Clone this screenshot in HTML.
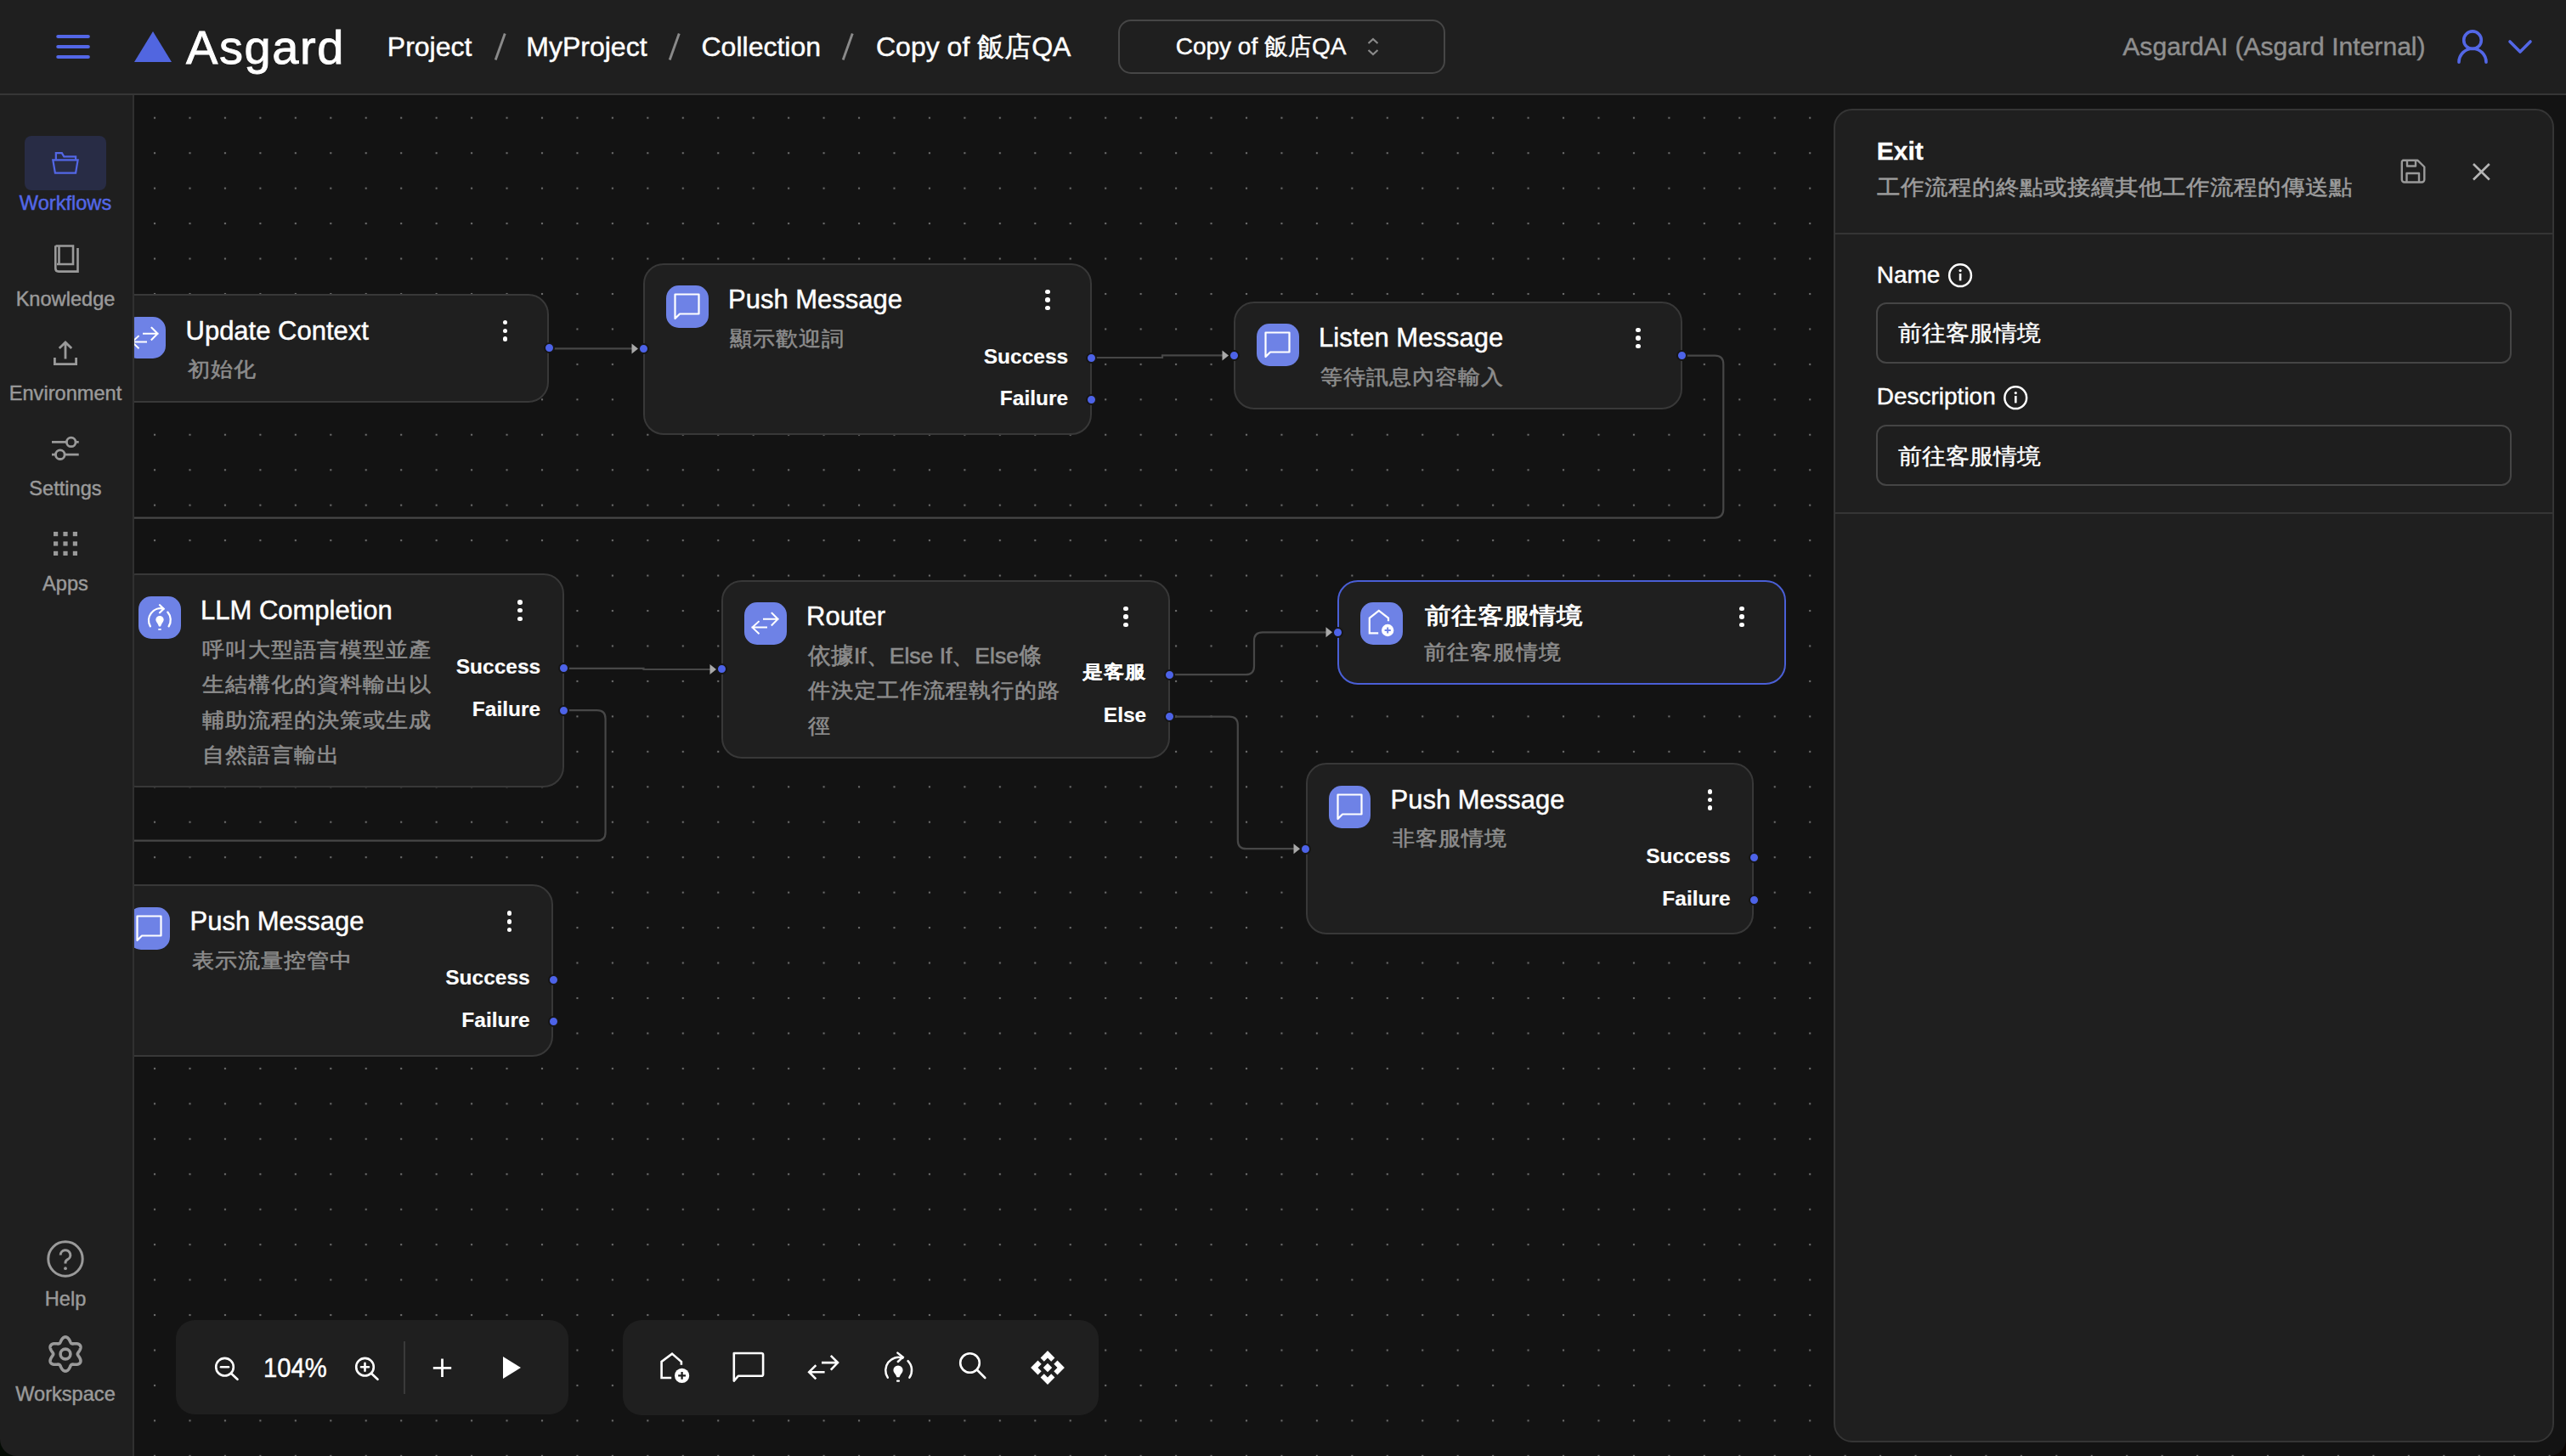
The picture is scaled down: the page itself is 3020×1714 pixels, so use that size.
<!DOCTYPE html>
<html><head><meta charset="utf-8">
<style>
*{box-sizing:border-box;margin:0;padding:0}
html,body{width:3020px;height:1714px;overflow:hidden;background:#131313;font-family:"Liberation Sans",sans-serif;color:#fff}
.txt{position:absolute;white-space:nowrap;line-height:1}
svg{position:absolute;overflow:visible}
.box{position:absolute}
</style></head><body>

<div class="box" style="left:0;top:112px;width:3020px;height:1602px;background:#131313"></div>
<svg style="left:0;top:0" width="3020" height="1714"><defs><pattern id="dp" x="161.3" y="118.0" width="41.45" height="41.45" patternUnits="userSpaceOnUse"><rect x="19.7" y="19.7" width="2.1" height="2.1" fill="#6c6c6c"/></pattern></defs><rect x="157" y="111" width="2863" height="1603" fill="url(#dp)"/></svg>
<svg style="left:0;top:0" width="3020" height="1714"><path d="M646.4 410.4 H744" fill="none" stroke="#474747" stroke-width="2.2"/></svg>
<svg style="left:0;top:0" width="3020" height="1714"><path d="M743.5 404.4 L751 410.4 L743.5 416.4 Z" fill="#a9a9a9"/></svg>
<svg style="left:0;top:0" width="3020" height="1714"><path d="M1285 421 H1368 V418.4 H1439" fill="none" stroke="#474747" stroke-width="2.2"/></svg>
<svg style="left:0;top:0" width="3020" height="1714"><path d="M1438.5 412.4 L1446 418.4 L1438.5 424.4 Z" fill="#a9a9a9"/></svg>
<svg style="left:0;top:0" width="3020" height="1714"><path d="M1980 418.6 H2018.3 Q2028.3 418.6 2028.3 428.6 V599.6 Q2028.3 609.6 2018.3 609.6 H150" fill="none" stroke="#474747" stroke-width="2.2"/></svg>
<svg style="left:0;top:0" width="3020" height="1714"><path d="M664.3 786.8 H757.5 V788 H836" fill="none" stroke="#474747" stroke-width="2.2"/></svg>
<svg style="left:0;top:0" width="3020" height="1714"><path d="M835.5 782 L843 788 L835.5 794 Z" fill="#a9a9a9"/></svg>
<svg style="left:0;top:0" width="3020" height="1714"><path d="M664.3 836.2 H702.6 Q712.6 836.2 712.6 846.2 V979.7 Q712.6 989.7 702.6 989.7 H150" fill="none" stroke="#474747" stroke-width="2.2"/></svg>
<svg style="left:0;top:0" width="3020" height="1714"><path d="M1377.3 794.2 H1466 Q1476 794.2 1476 784.2 V754.3 Q1476 744.3 1486 744.3 H1561" fill="none" stroke="#474747" stroke-width="2.2"/></svg>
<svg style="left:0;top:0" width="3020" height="1714"><path d="M1560.5 738.3 L1568 744.3 L1560.5 750.3 Z" fill="#a9a9a9"/></svg>
<svg style="left:0;top:0" width="3020" height="1714"><path d="M1377.3 843.6 H1446.8 Q1456.8 843.6 1456.8 853.6 V989.2 Q1456.8 999.2 1466.8 999.2 H1523" fill="none" stroke="#474747" stroke-width="2.2"/></svg>
<svg style="left:0;top:0" width="3020" height="1714"><path d="M1522.5 993.2 L1530 999.2 L1522.5 1005.2 Z" fill="#a9a9a9"/></svg>
<div class="box" style="left:118.5px;top:346px;width:527.5px;height:127.7px;background:#1f1f1f;border:2px solid #383838;border-radius:24px"></div>
<div class="box" style="left:145.5px;top:372.7px;width:49.7px;height:49.7px;background:#6e82e6;border-radius:15px"></div>
<svg style="left:145.5px;top:372.7px" width="50" height="50" viewBox="0 0 50 50"><g fill="none" stroke="#fff" stroke-width="2" stroke-linecap="square"><path d="M23 19.8 H39.5 M32.5 12.8 L39.5 19.8 L32.5 26.8"/><path d="M26 29.6 H9.5 M16.8 22.8 L9.5 29.6 L16.8 36.6"/></g></svg>
<div class="txt" style="left:218.5px;top:373.5px;font-size:31px;color:#fff;font-weight:normal;-webkit-text-stroke:0.45px #fff;">Update Context</div>
<div class="txt" style="left:220.5px;top:422.1px;font-size:26.5px;color:#8c8c8c;font-weight:normal;transform:scaleY(0.92);transform-origin:50% 48%;-webkit-text-stroke:0.6px #8c8c8c;">初始化</div>
<div class="box" style="left:591.8px;top:376.9px;width:5.5px;height:5.5px;border-radius:50%;background:#fff"></div>
<div class="box" style="left:591.8px;top:386.5px;width:5.5px;height:5.5px;border-radius:50%;background:#fff"></div>
<div class="box" style="left:591.8px;top:396.2px;width:5.5px;height:5.5px;border-radius:50%;background:#fff"></div>
<div class="box" style="left:112.0px;top:403.4px;width:13px;height:13px;border-radius:50%;background:#4d63e8;border:2.5px solid #161616"></div>
<div class="box" style="left:639.5px;top:403.4px;width:13px;height:13px;border-radius:50%;background:#4d63e8;border:2.5px solid #161616"></div>
<div class="box" style="left:757px;top:309.6px;width:527.5px;height:202.4px;background:#1f1f1f;border:2px solid #383838;border-radius:24px"></div>
<div class="box" style="left:784.0px;top:336.3px;width:49.7px;height:49.7px;background:#6e82e6;border-radius:15px"></div>
<svg style="left:784px;top:336.3px" width="50" height="50" viewBox="0 0 50 50"><path d="M10.5 10.5 H38.5 V33.5 H16 L10.5 39 Z" fill="none" stroke="#fff" stroke-width="2.2" stroke-linejoin="round"/></svg>
<div class="txt" style="left:857.0px;top:337.1px;font-size:31px;color:#fff;font-weight:normal;-webkit-text-stroke:0.45px #fff;">Push Message</div>
<div class="txt" style="left:859.0px;top:385.7px;font-size:26.5px;color:#8c8c8c;font-weight:normal;transform:scaleY(0.92);transform-origin:50% 48%;-webkit-text-stroke:0.6px #8c8c8c;">顯示歡迎詞</div>
<div class="box" style="left:1230.3px;top:340.5px;width:5.5px;height:5.5px;border-radius:50%;background:#fff"></div>
<div class="box" style="left:1230.3px;top:350.1px;width:5.5px;height:5.5px;border-radius:50%;background:#fff"></div>
<div class="box" style="left:1230.3px;top:359.8px;width:5.5px;height:5.5px;border-radius:50%;background:#fff"></div>
<div class="box" style="left:750.5px;top:404.3px;width:13px;height:13px;border-radius:50%;background:#4d63e8;border:2.5px solid #161616"></div>
<div class="txt" style="right:1762.8px;top:407.5px;font-size:24.5px;color:#fff;font-weight:bold;text-align:right;-webkit-text-stroke:0.15px #fff;">Success</div>
<div class="box" style="left:1278.0px;top:414.5px;width:13px;height:13px;border-radius:50%;background:#4d63e8;border:2.5px solid #161616"></div>
<div class="txt" style="right:1762.8px;top:457.3px;font-size:24.5px;color:#fff;font-weight:bold;text-align:right;-webkit-text-stroke:0.15px #fff;">Failure</div>
<div class="box" style="left:1278.0px;top:464.3px;width:13px;height:13px;border-radius:50%;background:#4d63e8;border:2.5px solid #161616"></div>
<div class="box" style="left:1452px;top:354.6px;width:527.5px;height:127.5px;background:#1f1f1f;border:2px solid #383838;border-radius:24px"></div>
<div class="box" style="left:1479.0px;top:381.3px;width:49.7px;height:49.7px;background:#6e82e6;border-radius:15px"></div>
<svg style="left:1479px;top:381.3px" width="50" height="50" viewBox="0 0 50 50"><path d="M10.5 10.5 H38.5 V33.5 H16 L10.5 39 Z" fill="none" stroke="#fff" stroke-width="2.2" stroke-linejoin="round"/></svg>
<div class="txt" style="left:1552.0px;top:382.1px;font-size:31px;color:#fff;font-weight:normal;-webkit-text-stroke:0.45px #fff;">Listen Message</div>
<div class="txt" style="left:1554.0px;top:430.7px;font-size:26.5px;color:#8c8c8c;font-weight:normal;transform:scaleY(0.92);transform-origin:50% 48%;-webkit-text-stroke:0.6px #8c8c8c;">等待訊息內容輸入</div>
<div class="box" style="left:1925.3px;top:385.5px;width:5.5px;height:5.5px;border-radius:50%;background:#fff"></div>
<div class="box" style="left:1925.3px;top:395.1px;width:5.5px;height:5.5px;border-radius:50%;background:#fff"></div>
<div class="box" style="left:1925.3px;top:404.8px;width:5.5px;height:5.5px;border-radius:50%;background:#fff"></div>
<div class="box" style="left:1445.5px;top:411.9px;width:13px;height:13px;border-radius:50%;background:#4d63e8;border:2.5px solid #161616"></div>
<div class="box" style="left:1973.0px;top:411.9px;width:13px;height:13px;border-radius:50%;background:#4d63e8;border:2.5px solid #161616"></div>
<div class="box" style="left:136px;top:675.4px;width:527.5px;height:251.2px;background:#1f1f1f;border:2px solid #383838;border-radius:24px"></div>
<div class="box" style="left:163.0px;top:702.1px;width:49.7px;height:49.7px;background:#6e82e6;border-radius:15px"></div>
<svg style="left:163px;top:702.1px" width="50" height="50" viewBox="0 0 50 50"><g fill="none" stroke="#fff" stroke-width="2.3" stroke-linecap="round"><path d="M13.9 35.3 A14 14 0 0 1 29.4 14.7"/><path d="M25 10.2 L29.6 14.7 L25 19.2"/><path d="M34.3 18.6 A14 14 0 0 1 35.6 35.3"/></g><path d="M25 22.9 a4.7 4.7 0 0 1 4.7 4.7 c0 2-1.4 3-2.4 5 l-1.3 2.9 h-2 l-1.3-2.9 c-1-2-2.4-3-2.4-5 a4.7 4.7 0 0 1 4.7-4.7z" fill="#fff"/><rect x="23.1" y="37.9" width="3.8" height="1.9" rx=".9" fill="#fff"/></svg>
<div class="txt" style="left:236.0px;top:702.9px;font-size:31px;color:#fff;font-weight:normal;-webkit-text-stroke:0.45px #fff;">LLM Completion</div>
<div class="txt" style="left:238.0px;top:751.5px;font-size:26.5px;color:#8c8c8c;font-weight:normal;transform:scaleY(0.92);transform-origin:50% 48%;-webkit-text-stroke:0.6px #8c8c8c;">呼叫大型語言模型並產</div>
<div class="txt" style="left:238.0px;top:793.0px;font-size:26.5px;color:#8c8c8c;font-weight:normal;transform:scaleY(0.92);transform-origin:50% 48%;-webkit-text-stroke:0.6px #8c8c8c;">生結構化的資料輸出以</div>
<div class="txt" style="left:238.0px;top:834.5px;font-size:26.5px;color:#8c8c8c;font-weight:normal;transform:scaleY(0.92);transform-origin:50% 48%;-webkit-text-stroke:0.6px #8c8c8c;">輔助流程的決策或生成</div>
<div class="txt" style="left:238.0px;top:876.0px;font-size:26.5px;color:#8c8c8c;font-weight:normal;transform:scaleY(0.92);transform-origin:50% 48%;-webkit-text-stroke:0.6px #8c8c8c;">自然語言輸出</div>
<div class="box" style="left:609.3px;top:706.3px;width:5.5px;height:5.5px;border-radius:50%;background:#fff"></div>
<div class="box" style="left:609.3px;top:715.9px;width:5.5px;height:5.5px;border-radius:50%;background:#fff"></div>
<div class="box" style="left:609.3px;top:725.6px;width:5.5px;height:5.5px;border-radius:50%;background:#fff"></div>
<div class="box" style="left:129.5px;top:794.5px;width:13px;height:13px;border-radius:50%;background:#4d63e8;border:2.5px solid #161616"></div>
<div class="txt" style="right:2383.8px;top:773.3px;font-size:24.5px;color:#fff;font-weight:bold;text-align:right;-webkit-text-stroke:0.15px #fff;">Success</div>
<div class="box" style="left:657.0px;top:780.3px;width:13px;height:13px;border-radius:50%;background:#4d63e8;border:2.5px solid #161616"></div>
<div class="txt" style="right:2383.8px;top:823.1px;font-size:24.5px;color:#fff;font-weight:bold;text-align:right;-webkit-text-stroke:0.15px #fff;">Failure</div>
<div class="box" style="left:657.0px;top:829.7px;width:13px;height:13px;border-radius:50%;background:#4d63e8;border:2.5px solid #161616"></div>
<div class="box" style="left:849px;top:682.7px;width:527.5px;height:210.3px;background:#1f1f1f;border:2px solid #383838;border-radius:24px"></div>
<div class="box" style="left:876.0px;top:709.4px;width:49.7px;height:49.7px;background:#6e82e6;border-radius:15px"></div>
<svg style="left:876px;top:709.4px" width="50" height="50" viewBox="0 0 50 50"><g fill="none" stroke="#fff" stroke-width="2" stroke-linecap="square"><path d="M23 19.8 H39.5 M32.5 12.8 L39.5 19.8 L32.5 26.8"/><path d="M26 29.6 H9.5 M16.8 22.8 L9.5 29.6 L16.8 36.6"/></g></svg>
<div class="txt" style="left:949.0px;top:710.2px;font-size:31px;color:#fff;font-weight:normal;-webkit-text-stroke:0.45px #fff;">Router</div>
<div class="txt" style="left:951.0px;top:758.8px;font-size:26.5px;color:#8c8c8c;font-weight:normal;-webkit-text-stroke:0.6px #8c8c8c;">依據If、Else If、Else條</div>
<div class="txt" style="left:951.0px;top:800.3px;font-size:26.5px;color:#8c8c8c;font-weight:normal;transform:scaleY(0.92);transform-origin:50% 48%;-webkit-text-stroke:0.6px #8c8c8c;">件決定工作流程執行的路</div>
<div class="txt" style="left:951.0px;top:841.8px;font-size:26.5px;color:#8c8c8c;font-weight:normal;transform:scaleY(0.92);transform-origin:50% 48%;-webkit-text-stroke:0.6px #8c8c8c;">徑</div>
<div class="box" style="left:1322.3px;top:713.6px;width:5.5px;height:5.5px;border-radius:50%;background:#fff"></div>
<div class="box" style="left:1322.3px;top:723.2px;width:5.5px;height:5.5px;border-radius:50%;background:#fff"></div>
<div class="box" style="left:1322.3px;top:732.9px;width:5.5px;height:5.5px;border-radius:50%;background:#fff"></div>
<div class="box" style="left:842.5px;top:781.4px;width:13px;height:13px;border-radius:50%;background:#4d63e8;border:2.5px solid #161616"></div>
<div class="txt" style="right:1670.8px;top:780.6px;font-size:24.5px;color:#fff;font-weight:bold;text-align:right;margin-top:-1.5px;transform:scaleY(0.87);transform-origin:50% 48%;-webkit-text-stroke:0.15px #fff;">是客服</div>
<div class="box" style="left:1370.0px;top:787.6px;width:13px;height:13px;border-radius:50%;background:#4d63e8;border:2.5px solid #161616"></div>
<div class="txt" style="right:1670.8px;top:830.4px;font-size:24.5px;color:#fff;font-weight:bold;text-align:right;-webkit-text-stroke:0.15px #fff;">Else</div>
<div class="box" style="left:1370.0px;top:837.2px;width:13px;height:13px;border-radius:50%;background:#4d63e8;border:2.5px solid #161616"></div>
<div class="box" style="left:1574px;top:682.7px;width:527.5px;height:123.3px;background:#1f1f1f;border:2px solid #4a5fd6;border-radius:24px"></div>
<div class="box" style="left:1601.0px;top:709.4px;width:49.7px;height:49.7px;background:#6e82e6;border-radius:15px"></div>
<svg style="left:1601px;top:709.4px" width="50" height="50" viewBox="0 0 50 50"><path d="M21.2 36.4 H10.8 V18.6 L21.8 10 L33 18.6 V22.2" fill="none" stroke="#fff" stroke-width="2.2"/><circle cx="32.2" cy="33" r="7.2" fill="#fff"/><path d="M32.2 29.4 V36.6 M28.6 33 H35.8" stroke="#6e82e6" stroke-width="1.9"/></svg>
<div class="txt" style="left:1676.8px;top:710.4px;font-size:30.7px;color:#fff;font-weight:bold;transform:scaleY(0.88);transform-origin:50% 48%;">前往客服情境</div>
<div class="txt" style="left:1676.0px;top:755.0px;font-size:26.5px;color:#8c8c8c;font-weight:normal;transform:scaleY(0.92);transform-origin:50% 48%;-webkit-text-stroke:0.6px #8c8c8c;">前往客服情境</div>
<div class="box" style="left:2047.3px;top:713.6px;width:5.5px;height:5.5px;border-radius:50%;background:#fff"></div>
<div class="box" style="left:2047.3px;top:723.2px;width:5.5px;height:5.5px;border-radius:50%;background:#fff"></div>
<div class="box" style="left:2047.3px;top:732.9px;width:5.5px;height:5.5px;border-radius:50%;background:#fff"></div>
<div class="box" style="left:1567.5px;top:737.9px;width:13px;height:13px;border-radius:50%;background:#4d63e8;border:2.5px solid #161616"></div>
<div class="box" style="left:1536.5px;top:898.2px;width:527.5px;height:201.5px;background:#1f1f1f;border:2px solid #383838;border-radius:24px"></div>
<div class="box" style="left:1563.5px;top:924.9px;width:49.7px;height:49.7px;background:#6e82e6;border-radius:15px"></div>
<svg style="left:1563.5px;top:924.9px" width="50" height="50" viewBox="0 0 50 50"><path d="M10.5 10.5 H38.5 V33.5 H16 L10.5 39 Z" fill="none" stroke="#fff" stroke-width="2.2" stroke-linejoin="round"/></svg>
<div class="txt" style="left:1636.5px;top:925.7px;font-size:31px;color:#fff;font-weight:normal;-webkit-text-stroke:0.45px #fff;">Push Message</div>
<div class="txt" style="left:1638.5px;top:974.3px;font-size:26.5px;color:#8c8c8c;font-weight:normal;transform:scaleY(0.92);transform-origin:50% 48%;-webkit-text-stroke:0.6px #8c8c8c;">非客服情境</div>
<div class="box" style="left:2009.8px;top:929.1px;width:5.5px;height:5.5px;border-radius:50%;background:#fff"></div>
<div class="box" style="left:2009.8px;top:938.8px;width:5.5px;height:5.5px;border-radius:50%;background:#fff"></div>
<div class="box" style="left:2009.8px;top:948.4px;width:5.5px;height:5.5px;border-radius:50%;background:#fff"></div>
<div class="box" style="left:1530.0px;top:992.5px;width:13px;height:13px;border-radius:50%;background:#4d63e8;border:2.5px solid #161616"></div>
<div class="txt" style="right:983.3px;top:996.1px;font-size:24.5px;color:#fff;font-weight:bold;text-align:right;-webkit-text-stroke:0.15px #fff;">Success</div>
<div class="box" style="left:2057.5px;top:1003.1px;width:13px;height:13px;border-radius:50%;background:#4d63e8;border:2.5px solid #161616"></div>
<div class="txt" style="right:983.3px;top:1045.9px;font-size:24.5px;color:#fff;font-weight:bold;text-align:right;-webkit-text-stroke:0.15px #fff;">Failure</div>
<div class="box" style="left:2057.5px;top:1052.7px;width:13px;height:13px;border-radius:50%;background:#4d63e8;border:2.5px solid #161616"></div>
<div class="box" style="left:123.5px;top:1041.4px;width:527.5px;height:202.2px;background:#1f1f1f;border:2px solid #383838;border-radius:24px"></div>
<div class="box" style="left:150.5px;top:1068.1px;width:49.7px;height:49.7px;background:#6e82e6;border-radius:15px"></div>
<svg style="left:150.5px;top:1068.1px" width="50" height="50" viewBox="0 0 50 50"><path d="M10.5 10.5 H38.5 V33.5 H16 L10.5 39 Z" fill="none" stroke="#fff" stroke-width="2.2" stroke-linejoin="round"/></svg>
<div class="txt" style="left:223.5px;top:1068.9px;font-size:31px;color:#fff;font-weight:normal;-webkit-text-stroke:0.45px #fff;">Push Message</div>
<div class="txt" style="left:225.5px;top:1117.5px;font-size:26.5px;color:#8c8c8c;font-weight:normal;transform:scaleY(0.92);transform-origin:50% 48%;-webkit-text-stroke:0.6px #8c8c8c;">表示流量控管中</div>
<div class="box" style="left:596.8px;top:1072.3px;width:5.5px;height:5.5px;border-radius:50%;background:#fff"></div>
<div class="box" style="left:596.8px;top:1082.0px;width:5.5px;height:5.5px;border-radius:50%;background:#fff"></div>
<div class="box" style="left:596.8px;top:1091.6px;width:5.5px;height:5.5px;border-radius:50%;background:#fff"></div>
<div class="txt" style="right:2396.3px;top:1139.3px;font-size:24.5px;color:#fff;font-weight:bold;text-align:right;-webkit-text-stroke:0.15px #fff;">Success</div>
<div class="box" style="left:644.5px;top:1147.0px;width:13px;height:13px;border-radius:50%;background:#4d63e8;border:2.5px solid #161616"></div>
<div class="txt" style="right:2396.3px;top:1189.1px;font-size:24.5px;color:#fff;font-weight:bold;text-align:right;-webkit-text-stroke:0.15px #fff;">Failure</div>
<div class="box" style="left:644.5px;top:1196.3px;width:13px;height:13px;border-radius:50%;background:#4d63e8;border:2.5px solid #161616"></div>
<div class="box" style="left:0;top:112px;width:158px;height:1602px;background:#1f1f1f;border-right:2px solid #303030"></div>
<div class="box" style="left:29px;top:160px;width:96px;height:64px;background:#282c45;border-radius:8px"></div>
<svg style="left:56px;top:174px" width="40" height="36" viewBox="0 0 40 36"><g fill="none" stroke="#5367e6" stroke-width="2.4" stroke-linejoin="miter" transform="translate(21 18.5) scale(0.93) translate(-21 -18.5)"><path d="M9 13.5 V5.2 H16.5 L19.2 9.8 H34 V13.5"/><path d="M5.2 14 H36.7 L34 30.5 H8 Z"/></g></svg>
<div class="txt" style="left:-223.0px;width:600px;top:228.0px;font-size:23.6px;color:#5367e6;font-weight:normal;text-align:center;-webkit-text-stroke:0.45px #5367e6;">Workflows</div>
<svg style="left:58px;top:283px" width="40" height="42" viewBox="0 0 40 42"><g fill="none" stroke="#9a9a9a" stroke-width="2.6"><path d="M7.5 6.5 H28 V28 H9"/><path d="M11.5 6.5 V28"/><path d="M7.3 6.3 V33 Q7.3 36.6 11 36.6 H33.5 V9"/></g></svg>
<div class="txt" style="left:-223.0px;width:600px;top:340.5px;font-size:23.6px;color:#9a9a9a;font-weight:normal;text-align:center;-webkit-text-stroke:0.45px #9a9a9a;">Knowledge</div>
<svg style="left:58px;top:398px" width="40" height="36" viewBox="0 0 40 36"><g fill="none" stroke="#9a9a9a" stroke-width="2.8"><path d="M19 5 V24.5 M11.8 12 L19 5 L26.2 12"/><path d="M6.4 23 V30.6 H31.6 V23"/></g></svg>
<div class="txt" style="left:-223.0px;width:600px;top:451.7px;font-size:23.6px;color:#9a9a9a;font-weight:normal;text-align:center;-webkit-text-stroke:0.45px #9a9a9a;">Environment</div>
<svg style="left:58px;top:510px" width="40" height="36" viewBox="0 0 40 36"><g fill="none" stroke="#9a9a9a" stroke-width="2.8"><path d="M3 10.4 H20 M31.5 10.4 H34.7"/><circle cx="25.7" cy="10.4" r="5.3"/><path d="M3 25.2 H7.5 M18.5 25.2 H34.7"/><circle cx="12.8" cy="25.2" r="5.3"/></g></svg>
<div class="txt" style="left:-223.0px;width:600px;top:564.0px;font-size:23.6px;color:#9a9a9a;font-weight:normal;text-align:center;-webkit-text-stroke:0.45px #9a9a9a;">Settings</div>
<svg style="left:58px;top:622px" width="40" height="36" viewBox="0 0 40 36"><rect x="5.0" y="4.0" width="5.2" height="5.2" fill="#9a9a9a"/><rect x="5.0" y="15.4" width="5.2" height="5.2" fill="#9a9a9a"/><rect x="5.0" y="26.8" width="5.2" height="5.2" fill="#9a9a9a"/><rect x="16.4" y="4.0" width="5.2" height="5.2" fill="#9a9a9a"/><rect x="16.4" y="15.4" width="5.2" height="5.2" fill="#9a9a9a"/><rect x="16.4" y="26.8" width="5.2" height="5.2" fill="#9a9a9a"/><rect x="27.8" y="4.0" width="5.2" height="5.2" fill="#9a9a9a"/><rect x="27.8" y="15.4" width="5.2" height="5.2" fill="#9a9a9a"/><rect x="27.8" y="26.8" width="5.2" height="5.2" fill="#9a9a9a"/></svg>
<div class="txt" style="left:-223.0px;width:600px;top:676.0px;font-size:23.6px;color:#9a9a9a;font-weight:normal;text-align:center;-webkit-text-stroke:0.45px #9a9a9a;">Apps</div>
<svg style="left:55px;top:1458px" width="46" height="48" viewBox="0 0 46 48"><g fill="none" stroke="#9a9a9a" stroke-width="3"><circle cx="22" cy="24" r="20.2"/><path d="M16.2 19.5 a5.8 5.8 0 1 1 8.4 5.2 c-1.6 .8-2.6 2-2.6 3.8 v1"/></g><circle cx="22" cy="35.2" r="1.9" fill="#9a9a9a"/></svg>
<div class="txt" style="left:-223.0px;width:600px;top:1518.3px;font-size:23.6px;color:#9a9a9a;font-weight:normal;text-align:center;-webkit-text-stroke:0.45px #9a9a9a;">Help</div>
<svg style="left:57px;top:1572px" width="40" height="44" viewBox="0 0 40 44"><g fill="none" stroke="#9a9a9a" stroke-width="3.6" stroke-linejoin="round"><path d="M20.00 1.90 L20.35 1.92 L20.70 1.97 L21.05 2.06 L21.39 2.17 L21.72 2.33 L22.05 2.51 L22.37 2.72 L22.68 2.96 L22.97 3.22 L23.26 3.51 L23.53 3.81 L23.80 4.14 L24.05 4.48 L24.28 4.83 L24.51 5.19 L24.72 5.55 L24.92 5.91 L25.11 6.28 L25.29 6.64 L25.46 7.00 L25.63 7.34 L25.79 7.68 L25.94 7.99 L26.10 8.30 L26.26 8.58 L26.42 8.84 L26.59 9.08 L26.76 9.29 L26.95 9.47 L27.15 9.62 L27.38 9.72 L27.63 9.79 L27.90 9.83 L28.19 9.86 L28.49 9.87 L28.82 9.86 L29.16 9.85 L29.51 9.83 L29.88 9.80 L30.26 9.77 L30.66 9.74 L31.06 9.72 L31.47 9.70 L31.89 9.69 L32.31 9.69 L32.73 9.71 L33.15 9.73 L33.57 9.78 L33.98 9.85 L34.38 9.93 L34.78 10.04 L35.15 10.16 L35.51 10.31 L35.86 10.48 L36.18 10.67 L36.48 10.89 L36.75 11.12 L37.00 11.38 L37.22 11.66 L37.41 11.95 L37.57 12.26 L37.70 12.59 L37.80 12.93 L37.86 13.29 L37.90 13.65 L37.90 14.03 L37.88 14.41 L37.83 14.80 L37.75 15.19 L37.64 15.58 L37.52 15.97 L37.37 16.36 L37.20 16.74 L37.01 17.12 L36.81 17.49 L36.61 17.86 L36.39 18.22 L36.17 18.56 L35.94 18.90 L35.72 19.23 L35.51 19.54 L35.30 19.85 L35.10 20.15 L34.92 20.43 L34.75 20.71 L34.61 20.98 L34.49 21.24 L34.39 21.50 L34.33 21.75 L34.30 22.00 L34.33 22.25 L34.39 22.50 L34.49 22.76 L34.61 23.02 L34.75 23.29 L34.92 23.57 L35.10 23.85 L35.30 24.15 L35.51 24.46 L35.72 24.77 L35.94 25.10 L36.17 25.44 L36.39 25.78 L36.61 26.14 L36.81 26.51 L37.01 26.88 L37.20 27.26 L37.37 27.64 L37.52 28.03 L37.64 28.42 L37.75 28.81 L37.83 29.20 L37.88 29.59 L37.90 29.97 L37.90 30.35 L37.86 30.71 L37.80 31.07 L37.70 31.41 L37.57 31.74 L37.41 32.05 L37.22 32.34 L37.00 32.62 L36.75 32.88 L36.48 33.11 L36.18 33.33 L35.86 33.52 L35.51 33.69 L35.15 33.84 L34.78 33.96 L34.38 34.07 L33.98 34.15 L33.57 34.22 L33.15 34.27 L32.73 34.29 L32.31 34.31 L31.89 34.31 L31.47 34.30 L31.06 34.28 L30.66 34.26 L30.26 34.23 L29.88 34.20 L29.51 34.17 L29.16 34.15 L28.82 34.14 L28.49 34.13 L28.19 34.14 L27.90 34.17 L27.63 34.21 L27.38 34.28 L27.15 34.38 L26.95 34.53 L26.76 34.71 L26.59 34.92 L26.42 35.16 L26.26 35.42 L26.10 35.70 L25.94 36.01 L25.79 36.32 L25.63 36.66 L25.46 37.00 L25.29 37.36 L25.11 37.72 L24.92 38.09 L24.72 38.45 L24.51 38.81 L24.28 39.17 L24.05 39.52 L23.80 39.86 L23.53 40.19 L23.26 40.49 L22.97 40.78 L22.68 41.04 L22.37 41.28 L22.05 41.49 L21.72 41.67 L21.39 41.83 L21.05 41.94 L20.70 42.03 L20.35 42.08 L20.00 42.10 L19.65 42.08 L19.30 42.03 L18.95 41.94 L18.61 41.83 L18.28 41.67 L17.95 41.49 L17.63 41.28 L17.32 41.04 L17.03 40.78 L16.74 40.49 L16.47 40.19 L16.20 39.86 L15.95 39.52 L15.72 39.17 L15.49 38.81 L15.28 38.45 L15.08 38.09 L14.89 37.72 L14.71 37.36 L14.54 37.00 L14.37 36.66 L14.21 36.32 L14.06 36.01 L13.90 35.70 L13.74 35.42 L13.58 35.16 L13.41 34.92 L13.24 34.71 L13.05 34.53 L12.85 34.38 L12.62 34.28 L12.37 34.21 L12.10 34.17 L11.81 34.14 L11.51 34.13 L11.18 34.14 L10.84 34.15 L10.49 34.17 L10.12 34.20 L9.74 34.23 L9.34 34.26 L8.94 34.28 L8.53 34.30 L8.11 34.31 L7.69 34.31 L7.27 34.29 L6.85 34.27 L6.43 34.22 L6.02 34.15 L5.62 34.07 L5.22 33.96 L4.85 33.84 L4.49 33.69 L4.14 33.52 L3.82 33.33 L3.52 33.11 L3.25 32.88 L3.00 32.62 L2.78 32.34 L2.59 32.05 L2.43 31.74 L2.30 31.41 L2.20 31.07 L2.14 30.71 L2.10 30.35 L2.10 29.97 L2.12 29.59 L2.17 29.20 L2.25 28.81 L2.36 28.42 L2.48 28.03 L2.63 27.64 L2.80 27.26 L2.99 26.88 L3.19 26.51 L3.39 26.14 L3.61 25.78 L3.83 25.44 L4.06 25.10 L4.28 24.77 L4.49 24.46 L4.70 24.15 L4.90 23.85 L5.08 23.57 L5.25 23.29 L5.39 23.02 L5.51 22.76 L5.61 22.50 L5.67 22.25 L5.70 22.00 L5.67 21.75 L5.61 21.50 L5.51 21.24 L5.39 20.98 L5.25 20.71 L5.08 20.43 L4.90 20.15 L4.70 19.85 L4.49 19.54 L4.28 19.23 L4.06 18.90 L3.83 18.56 L3.61 18.22 L3.39 17.86 L3.19 17.49 L2.99 17.12 L2.80 16.74 L2.63 16.36 L2.48 15.97 L2.36 15.58 L2.25 15.19 L2.17 14.80 L2.12 14.41 L2.10 14.03 L2.10 13.65 L2.14 13.29 L2.20 12.93 L2.30 12.59 L2.43 12.26 L2.59 11.95 L2.78 11.66 L3.00 11.38 L3.25 11.12 L3.52 10.89 L3.82 10.67 L4.14 10.48 L4.49 10.31 L4.85 10.16 L5.22 10.04 L5.62 9.93 L6.02 9.85 L6.43 9.78 L6.85 9.73 L7.27 9.71 L7.69 9.69 L8.11 9.69 L8.53 9.70 L8.94 9.72 L9.34 9.74 L9.74 9.77 L10.12 9.80 L10.49 9.83 L10.84 9.85 L11.18 9.86 L11.51 9.87 L11.81 9.86 L12.10 9.83 L12.37 9.79 L12.62 9.72 L12.85 9.62 L13.05 9.47 L13.24 9.29 L13.41 9.08 L13.58 8.84 L13.74 8.58 L13.90 8.30 L14.06 7.99 L14.21 7.68 L14.37 7.34 L14.54 7.00 L14.71 6.64 L14.89 6.28 L15.08 5.91 L15.28 5.55 L15.49 5.19 L15.72 4.83 L15.95 4.48 L16.20 4.14 L16.47 3.81 L16.74 3.51 L17.03 3.22 L17.32 2.96 L17.63 2.72 L17.95 2.51 L18.28 2.33 L18.61 2.17 L18.95 2.06 L19.30 1.97 L19.65 1.92 L20.00 1.90Z"/><circle cx="20" cy="22" r="5.9"/></g></svg>
<div class="txt" style="left:-223.0px;width:600px;top:1629.6px;font-size:23.6px;color:#9a9a9a;font-weight:normal;text-align:center;-webkit-text-stroke:0.45px #9a9a9a;">Workspace</div>
<div class="box" style="left:0;top:0;width:3020px;height:112px;background:#1f1f1f;border-bottom:2px solid #363636"></div>
<svg style="left:60px;top:36px" width="52" height="38" viewBox="0 0 52 38"><g stroke="#5367e6" stroke-width="4.2" stroke-linecap="round"><path d="M8.3 7 H43.8 M8.3 19 H43.8 M8.3 31 H43.8"/></g></svg>
<svg style="left:150px;top:30px" width="60" height="50" viewBox="0 0 60 50"><path d="M8 43 L52 43 L30 7 Z" fill="#5166e0"/></svg>
<div class="txt" style="left:219.0px;top:27.6px;font-size:56px;color:#fff;font-weight:normal;letter-spacing:1.6px;-webkit-text-stroke:0.9px #fff;">Asgard</div>
<div class="txt" style="left:455.8px;top:38.9px;font-size:32px;color:#fff;font-weight:normal;-webkit-text-stroke:0.45px #fff;">Project</div>
<svg style="left:581px;top:38px" width="16" height="34" viewBox="0 0 16 34"><path d="M13.3 1.5 L2.2 32.5" stroke="#8a8a8a" stroke-width="2.9"/></svg>
<div class="txt" style="left:619.3px;top:38.9px;font-size:32px;color:#fff;font-weight:normal;-webkit-text-stroke:0.45px #fff;">MyProject</div>
<svg style="left:786px;top:38px" width="16" height="34" viewBox="0 0 16 34"><path d="M13.3 1.5 L2.2 32.5" stroke="#8a8a8a" stroke-width="2.9"/></svg>
<div class="txt" style="left:825.5px;top:38.9px;font-size:32px;color:#fff;font-weight:normal;-webkit-text-stroke:0.45px #fff;">Collection</div>
<svg style="left:990px;top:38px" width="16" height="34" viewBox="0 0 16 34"><path d="M13.3 1.5 L2.2 32.5" stroke="#8a8a8a" stroke-width="2.9"/></svg>
<div class="txt" style="left:1031.0px;top:38.9px;font-size:32px;color:#fff;font-weight:normal;-webkit-text-stroke:0.45px #fff;">Copy of 飯店QA</div>
<div class="box" style="left:1316px;top:23px;width:384.5px;height:64.2px;border:2px solid #464646;border-radius:15px"></div>
<div class="txt" style="left:1383.7px;top:40.5px;font-size:28px;color:#fff;font-weight:normal;-webkit-text-stroke:0.45px #fff;">Copy of 飯店QA</div>
<svg style="left:1606px;top:42px" width="20" height="26" viewBox="0 0 20 26"><g fill="none" stroke="#8a8a8a" stroke-width="2.2"><path d="M4.5 9 L10 4 L15.5 9 M4.5 17 L10 22 L15.5 17"/></g></svg>
<div class="txt" style="left:2498.3px;top:39.9px;font-size:30.1px;color:#8f8f8f;font-weight:normal;-webkit-text-stroke:0.45px #8f8f8f;">AsgardAI (Asgard Internal)</div>
<svg style="left:2886px;top:30px" width="48" height="48" viewBox="0 0 48 48"><g fill="none" stroke="#5367e6" stroke-width="3.6" stroke-linecap="round"><circle cx="24" cy="17.2" r="10.3"/><path d="M8 43.2 a16 16 0 0 1 32 0"/></g></svg>
<svg style="left:2948px;top:42px" width="36" height="26" viewBox="0 0 36 26"><path d="M6 7 L18 19 L30 7" fill="none" stroke="#5367e6" stroke-width="3.6" stroke-linecap="round" stroke-linejoin="round"/></svg>
<div class="box" style="left:2158px;top:128px;width:848px;height:1569.5px;background:#1f1f1f;border:2px solid #353535;border-radius:22px;overflow:hidden"><div class="box" style="left:0;top:144px;width:100%;height:2px;background:#353535"></div><div class="box" style="left:0;top:473.2px;width:100%;height:2px;background:#353535"></div></div>
<div class="txt" style="left:2208.7px;top:163.3px;font-size:30px;color:#fff;font-weight:bold;-webkit-text-stroke:0.3px #fff;">Exit</div>
<div class="txt" style="left:2208.7px;top:207.2px;font-size:27.5px;color:#9c9c9c;font-weight:normal;transform:scaleY(0.91);transform-origin:50% 48%;-webkit-text-stroke:0.55px #9c9c9c;">工作流程的終點或接續其他工作流程的傳送點</div>
<svg style="left:2822px;top:184px" width="36" height="36" viewBox="0 0 36 36"><g fill="none" stroke="#9a9a9a" stroke-width="2.4" stroke-linejoin="round"><path d="M6 4.8 H23.5 L31.3 12.5 V27.5 a3 3 0 0 1 -3 3 H7.8 a3 3 0 0 1 -3 -3 V7.8 a3 3 0 0 1 1.2-3z"/><path d="M11 4.8 V11.5 H21 V4.8"/><path d="M10.5 30.5 V20 H25 V30.5"/></g></svg>
<svg style="left:2906px;top:188px" width="30" height="28" viewBox="0 0 30 28"><path d="M5 5 L23.8 23.5 M23.8 5 L5 23.5" stroke="#b5b5b5" stroke-width="2.6"/></svg>
<div class="txt" style="left:2208.7px;top:309.9px;font-size:28px;color:#fff;font-weight:normal;-webkit-text-stroke:0.45px #fff;">Name</div>
<svg style="left:2290px;top:307px" width="34" height="34" viewBox="0 0 34 34"><circle cx="17.05" cy="17.15" r="12.9" fill="none" stroke="#fff" stroke-width="2.5"/><rect x="15.8" y="15" width="2.6" height="8.4" fill="#fff"/><circle cx="17.1" cy="11.6" r="1.6" fill="#fff"/></svg>
<div class="box" style="left:2208.2px;top:355.8px;width:747.4px;height:72.2px;background:#1e1e1e;border:2px solid #454545;border-radius:12px"></div>
<div class="txt" style="left:2234.4px;top:379.3px;font-size:28px;color:#fff;font-weight:normal;transform:scaleY(0.93);transform-origin:50% 48%;-webkit-text-stroke:0.45px #fff;">前往客服情境</div>
<div class="txt" style="left:2208.7px;top:453.3px;font-size:28px;color:#fff;font-weight:normal;-webkit-text-stroke:0.45px #fff;">Description</div>
<svg style="left:2354.5px;top:450.5px" width="34" height="34" viewBox="0 0 34 34"><circle cx="17.25" cy="17.15" r="12.9" fill="none" stroke="#fff" stroke-width="2.5"/><rect x="16" y="15" width="2.6" height="8.4" fill="#fff"/><circle cx="17.3" cy="11.6" r="1.6" fill="#fff"/></svg>
<div class="box" style="left:2208.2px;top:499.9px;width:747.4px;height:72.2px;background:#1e1e1e;border:2px solid #454545;border-radius:12px"></div>
<div class="txt" style="left:2234.4px;top:523.5px;font-size:28px;color:#fff;font-weight:normal;transform:scaleY(0.93);transform-origin:50% 48%;-webkit-text-stroke:0.45px #fff;">前往客服情境</div>
<div class="box" style="left:206.5px;top:1554px;width:462.3px;height:111px;background:#1f1f1f;border-radius:22px"></div>
<svg style="left:250.2px;top:1594.5px" width="36" height="34" viewBox="0 0 36 34"><g fill="none" stroke="#fff" stroke-width="2.6" stroke-linecap="round"><circle cx="14.5" cy="14.2" r="10.3"/><path d="M22 21.8 L29.5 28.8"/><path d="M10 14.2 H19"/></g></svg>
<div class="txt" style="left:310.0px;top:1594.7px;font-size:31.6px;color:#fff;font-weight:normal;transform:scaleX(0.925);transform-origin:0 0;-webkit-text-stroke:0.45px #fff;">104%</div>
<svg style="left:415.1px;top:1594.5px" width="36" height="34" viewBox="0 0 36 34"><g fill="none" stroke="#fff" stroke-width="2.6" stroke-linecap="round"><circle cx="14.5" cy="14.2" r="10.3"/><path d="M22 21.8 L29.5 28.8"/><path d="M10 14.2 H19 M14.5 9.7 V18.7"/></g></svg>
<div class="box" style="left:475px;top:1578.7px;width:2px;height:62.7px;background:#3a3a3a"></div>
<svg style="left:506px;top:1596px" width="30" height="30" viewBox="0 0 30 30"><path d="M14.5 3.5 V25 M3.8 14.3 H25.2" stroke="#fff" stroke-width="2.8"/></svg>
<svg style="left:588px;top:1594px" width="30" height="32" viewBox="0 0 30 32"><path d="M4 3 L25 16 L4 29 Z" fill="#fff"/></svg>
<div class="box" style="left:733px;top:1553.8px;width:559.5px;height:112.2px;background:#1f1f1f;border-radius:22px"></div>
<svg style="left:772px;top:1588px" width="44" height="44" viewBox="0 0 44 44"><path d="M18.2 34 H6.6 V15 L19 5.6 L29.9 15 V18.8" fill="none" stroke="#fff" stroke-width="2.6"/><circle cx="30.6" cy="31.4" r="8.6" fill="#fff"/><path d="M30.6 27 V35.8 M26.2 31.4 H35" stroke="#1f1f1f" stroke-width="2.3"/></svg>
<svg style="left:858px;top:1588px" width="44" height="44" viewBox="0 0 44 44"><path d="M5.8 5 H38.3 a1.8 1.8 0 0 1 1.8 1.8 V30 a1.8 1.8 0 0 1 -1.8 1.8 H10.8 L5.8 37.6 Z" fill="none" stroke="#fff" stroke-width="2.6" stroke-linejoin="round"/></svg>
<svg style="left:947px;top:1590px" width="44" height="40" viewBox="0 0 44 40"><g fill="none" stroke="#fff" stroke-width="2.6"><path d="M20 14.1 H38.6 M30.8 5.9 L39 14.1 L30.8 22.6"/><path d="M23.6 25.2 H5.4 M13.3 17.2 L5.2 25.2 L13.3 33.4"/></g></svg>
<svg style="left:1035px;top:1588px" width="44" height="44" viewBox="0 0 44 44"><g fill="none" stroke="#fff" stroke-width="2.5" stroke-linecap="round"><path d="M9.8 33.6 A15.3 15.3 0 0 1 27.4 10.6"/><path d="M21.4 4.6 L27.6 9.6 L21.8 15"/><path d="M33.6 14.2 A15.3 15.3 0 0 1 35.4 33.6"/></g><path d="M22 19.4 a5.6 5.6 0 0 1 5.6 5.6 c0 2.4-1.7 3.6-2.8 5.6 l-1.3 2.6 h-3 l-1.3-2.6 c-1.1-2-2.8-3.2-2.8-5.6 a5.6 5.6 0 0 1 5.6-5.6z" fill="#fff"/><rect x="20" y="36.4" width="4" height="2.3" rx=".9" fill="#fff"/></svg>
<svg style="left:1124px;top:1590px" width="44" height="40" viewBox="0 0 44 40"><g fill="none" stroke="#fff" stroke-width="2.6" stroke-linecap="round"><circle cx="17.5" cy="14.5" r="11.3"/><path d="M25.8 22.5 L35.3 32"/></g></svg>
<svg style="left:1209px;top:1586px" width="48" height="48" viewBox="0 0 48 48"><path d="M24.00 4.10 L32.40 12.50 L28.20 16.70 L24.00 12.50 L19.80 16.70 L15.60 12.50Z M43.90 24.00 L35.50 32.40 L31.30 28.20 L35.50 24.00 L31.30 19.80 L35.50 15.60Z M24.00 43.90 L15.60 35.50 L19.80 31.30 L24.00 35.50 L28.20 31.30 L32.40 35.50Z M4.10 24.00 L12.50 15.60 L16.70 19.80 L12.50 24.00 L16.70 28.20 L12.50 32.40Z M24 18.8 L29.2 24 L24 29.2 L18.8 24Z" fill="#fff"/></svg>
<svg style="left:0;top:1694px" width="20" height="20"><path d="M0 0 V20 H20 A20 20 0 0 1 0 0Z" fill="#050c05"/></svg>
<svg style="left:3000px;top:1694px" width="20" height="20"><path d="M20 0 V20 H0 A20 20 0 0 0 20 0Z" fill="#0c0604"/></svg>
</body></html>
